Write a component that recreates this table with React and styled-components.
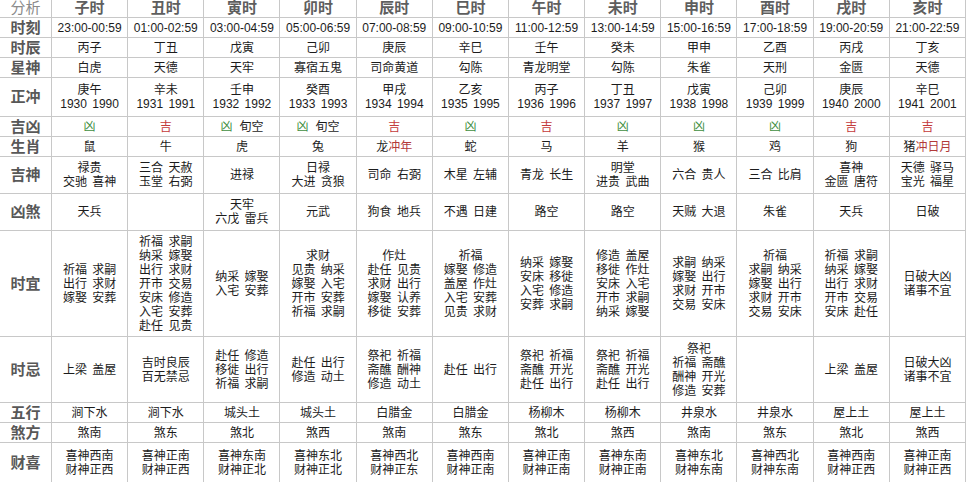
import React from "react";
import styled, { createGlobalStyle } from "styled-components";

const LINE = "#c8c8c8";

const GlobalStyle = createGlobalStyle`
  html, body {
    margin: 0;
    padding: 0;
    background: #fff;
  }
  body {
    width: 966px;
    height: 482px;
    overflow: hidden;
  }
`;

// row heights taken from the screenshot
const HEIGHTS = [21, 20, 20, 20, 39, 20, 20, 37, 37, 106, 66, 20, 20, 40];

const Table = styled.div`
  display: grid;
  grid-template-columns: 52px repeat(12, 1fr);
  grid-template-rows: ${(p) => p.$rows};
  width: 966px;
  margin-top: -3px;
  font-family: "Liberation Sans", "Noto Sans CJK SC", sans-serif;
  color: #1c1c1c;
`;

const Cell = styled.div`
  box-sizing: border-box;
  display: flex;
  align-items: center;
  justify-content: center;
  text-align: center;
  white-space: pre;
  overflow: hidden;
  font-size: 12px;
  line-height: 14px;
  word-spacing: 2px;
  border-right: 1px solid ${LINE};
  border-bottom: 1px solid ${LINE};
`;

const HeadCell = styled(Cell)`
  font-size: 15px;
  line-height: 21px;
  font-weight: ${(p) => (p.$corner ? 400 : 700)};
  color: ${(p) => (p.$corner ? "#8a8a8a" : "#5e5e5e")};
`;

const LabelCell = styled(Cell)`
  font-size: 15px;
  line-height: 18px;
  font-weight: 700;
  color: #585858;
`;

const Mark = styled.span`
  color: ${(p) => (p.$good ? "#c43a3a" : "#3f8f3f")};
  margin-right: ${(p) => (p.$spaced ? "7px" : "0")};
`;

const Clash = styled.span`
  color: #b23a3a;
`;

const hours = ["子时", "丑时", "寅时", "卯时", "辰时", "巳时", "午时", "未时", "申时", "酉时", "戌时", "亥时"];

const luck = [
  ["凶"], ["吉"], ["凶", "旬空"], ["凶", "旬空"], ["吉"], ["凶"],
  ["吉"], ["凶"], ["凶"], ["凶"], ["吉"], ["吉"],
];

const animals = [
  ["鼠"], ["牛"], ["虎"], ["兔"], ["龙", "冲年"], ["蛇"],
  ["马"], ["羊"], ["猴"], ["鸡"], ["狗"], ["猪", "冲日月"],
];

const rows = [
  ["时刻", ["23:00-00:59", "01:00-02:59", "03:00-04:59", "05:00-06:59", "07:00-08:59", "09:00-10:59", "11:00-12:59", "13:00-14:59", "15:00-16:59", "17:00-18:59", "19:00-20:59", "21:00-22:59"]],
  ["时辰", ["丙子", "丁丑", "戊寅", "己卯", "庚辰", "辛巳", "壬午", "癸未", "甲申", "乙酉", "丙戌", "丁亥"]],
  ["星神", ["白虎", "天德", "天牢", "寡宿五鬼", "司命黄道", "勾陈", "青龙明堂", "勾陈", "朱雀", "天刑", "金匮", "天德"]],
  ["正冲", [
    "庚午\n1930 1990", "辛未\n1931 1991", "壬申\n1932 1992", "癸酉\n1933 1993",
    "甲戌\n1934 1994", "乙亥\n1935 1995", "丙子\n1936 1996", "丁丑\n1937 1997",
    "戊寅\n1938 1998", "己卯\n1939 1999", "庚辰\n1940 2000", "辛巳\n1941 2001",
  ]],
  ["吉凶", "luck"],
  ["生肖", "animals"],
  ["吉神", [
    "禄贵\n交驰 喜神", "三合 天赦\n玉堂 右弼", "进禄", "日禄\n大进 贪狼",
    "司命 右弼", "木星 左辅", "青龙 长生", "明堂\n进贵 武曲",
    "六合 贵人", "三合 比肩", "喜神\n金匮 唐符", "天德 驿马\n宝光 福星",
  ]],
  ["凶煞", [
    "天兵", "", "天牢\n六戊 雷兵", "元武", "狗食 地兵", "不遇 日建",
    "路空", "路空", "天贼 大退", "朱雀", "天兵", "日破",
  ]],
  ["时宜", [
    "祈福 求嗣\n出行 求财\n嫁娶 安葬",
    "祈福 求嗣\n纳采 嫁娶\n出行 求财\n开市 交易\n安床 修造\n入宅 安葬\n赴任 见贵",
    "纳采 嫁娶\n入宅 安葬",
    "求财\n见贵 纳采\n嫁娶 入宅\n开市 安葬\n祈福 求嗣",
    "作灶\n赴任 见贵\n求财 出行\n嫁娶 认养\n移徙 安葬",
    "祈福\n嫁娶 修造\n盖屋 作灶\n入宅 安葬\n见贵 求财",
    "纳采 嫁娶\n安床 移徙\n入宅 修造\n安葬 求嗣",
    "修造 盖屋\n移徙 作灶\n安床 入宅\n开市 求嗣\n纳采 嫁娶",
    "求嗣 纳采\n嫁娶 出行\n求财 开市\n交易 安床",
    "祈福\n求嗣 纳采\n嫁娶 出行\n求财 开市\n交易 安床",
    "祈福 求嗣\n纳采 嫁娶\n出行 求财\n开市 交易\n安床 赴任",
    "日破大凶\n诸事不宜",
  ]],
  ["时忌", [
    "上梁 盖屋",
    "吉时良辰\n百无禁忌",
    "赴任 修造\n移徙 出行\n祈福 求嗣",
    "赴任 出行\n修造 动土",
    "祭祀 祈福\n斋醮 酬神\n修造 动土",
    "赴任 出行",
    "祭祀 祈福\n斋醮 开光\n赴任 出行",
    "祭祀 祈福\n斋醮 开光\n赴任 出行",
    "祭祀\n祈福 斋醮\n酬神 开光\n修造 安葬",
    "",
    "上梁 盖屋",
    "日破大凶\n诸事不宜",
  ]],
  ["五行", ["涧下水", "涧下水", "城头土", "城头土", "白腊金", "白腊金", "杨柳木", "杨柳木", "井泉水", "井泉水", "屋上土", "屋上土"]],
  ["煞方", ["煞南", "煞东", "煞北", "煞西", "煞南", "煞东", "煞北", "煞西", "煞南", "煞东", "煞北", "煞西"]],
  ["财喜", [
    "喜神西南\n财神正西", "喜神正南\n财神正西", "喜神东南\n财神正北", "喜神东北\n财神正北",
    "喜神西北\n财神正东", "喜神西南\n财神正南", "喜神正南\n财神正南", "喜神东南\n财神正南",
    "喜神东北\n财神东南", "喜神西北\n财神东南", "喜神西南\n财神正西", "喜神正南\n财神正西",
  ]],
];

function renderCells(label, cells) {
  if (cells === "luck") {
    return luck.map(([m, extra], i) => (
      <Cell key={label + i}>
        <Mark $good={m === "吉"} $spaced={!!extra}>{m}</Mark>
        {extra}
      </Cell>
    ));
  }
  if (cells === "animals") {
    return animals.map(([a, clash], i) => (
      <Cell key={label + i}>
        {a}
        {clash && <Clash>{clash}</Clash>}
      </Cell>
    ));
  }
  return cells.map((text, i) => <Cell key={label + i}>{text}</Cell>);
}

export default function App() {
  return (
    <>
      <GlobalStyle />
      <Table $rows={HEIGHTS.map((h) => h + "px").join(" ")}>
        <HeadCell $corner>分析</HeadCell>
        {hours.map((h) => (
          <HeadCell key={h}>{h}</HeadCell>
        ))}
        {rows.map(([label, cells]) => (
          <React.Fragment key={label}>
            <LabelCell>{label}</LabelCell>
            {renderCells(label, cells)}
          </React.Fragment>
        ))}
      </Table>
    </>
  );
}
